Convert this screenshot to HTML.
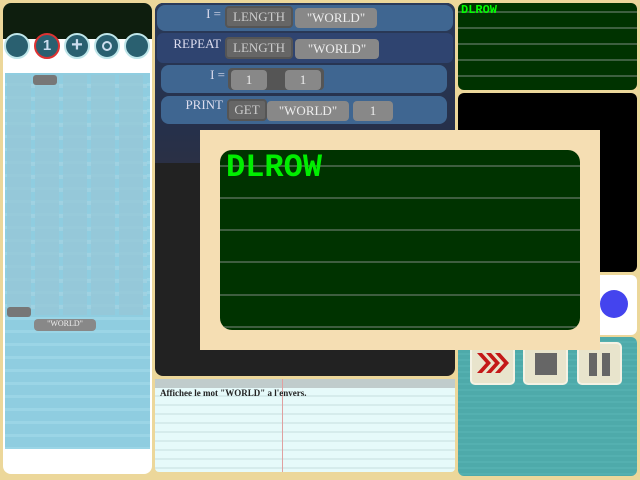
<!DOCTYPE html>
<html><head><style>
body{margin:0;width:640px;height:480px;background:#ecd79a;position:relative;overflow:hidden;font-family:"Liberation Serif",serif}
div{position:absolute;box-sizing:border-box}
.circ{width:26px;height:26px;border-radius:50%;background:#2a6070;border:2px solid #bfe6ea;top:33px}
.blk{background:#3f6691;border-radius:8px}
.lbl{color:#dde;font-size:13px;text-align:right}
.pill{background:#666;border:2px solid #555;border-radius:4px;color:#ccc;font-size:13px;text-align:center;line-height:18px;height:22px}
.pill2{background:#888;border-radius:4px;color:#eee;font-size:13px;text-align:center;line-height:20px;height:20px}
.gl{left:0;right:0;height:2px;background:#3e6040}
.btn{background:#e8e4cc;border-radius:5px;width:45px;height:43px;top:342px;border:2px solid #f4f2e4}
</style></head><body>
<!-- left panel -->
<div style="left:3px;top:3px;width:149px;height:471px;background:#fff;border-radius:8px;overflow:hidden">
 <div style="left:0;top:0;width:149px;height:36px;background:#0e1e0e"></div>
 <div style="left:2px;top:70px;width:145px;height:376px;background:repeating-linear-gradient(#8fcde0 0 10px,#9bd5e6 10px 13px)"></div>
 <div style="left:4px;top:72px;width:140px;height:240px;background:repeating-linear-gradient(90deg,#97c8d8 0 24px,transparent 24px 28px),repeating-linear-gradient(#8fcde0 0 9px,#a2d2e2 9px 13px);opacity:.8"></div>
 <div style="left:30px;top:72px;width:24px;height:10px;background:#777;border-radius:3px"></div>
 <div style="left:4px;top:304px;width:24px;height:10px;background:#777;border-radius:3px"></div>
 <div style="left:31px;top:316px;width:62px;height:12px;background:#888;border-radius:4px;color:#eee;font-size:8px;text-align:center">"WORLD"</div>
</div>
<div class="circ" style="left:4px"></div>
<div class="circ" style="left:34px;border-color:#d33;color:#cde;font:bold 15px 'Liberation Sans',sans-serif;text-align:center;line-height:22px">1</div>
<div class="circ" style="left:64px;color:#cde;font:bold 20px 'Liberation Sans',sans-serif;text-align:center;line-height:21px">+</div>
<div class="circ" style="left:94px"><div style="left:6px;top:6px;width:10px;height:10px;border:2px solid #cde;border-radius:50%"></div></div>
<div class="circ" style="left:124px"></div>
<!-- code area -->
<div style="left:155px;top:3px;width:300px;height:373px;background:#222;border-radius:8px;overflow:hidden">
 <div style="left:0;top:0;width:300px;height:160px;background:linear-gradient(#2a3a5a,#26304a 80%,#2a3045)"></div>
 <div class="blk" style="left:2px;top:2px;width:296px;height:26px"></div>
 <div style="left:2px;top:30px;width:296px;height:30px;background:#2f4470;border-radius:6px"></div>
 <div class="blk" style="left:6px;top:62px;width:286px;height:28px"></div>
 <div class="blk" style="left:6px;top:93px;width:286px;height:28px"></div>
 <div class="lbl" style="left:20px;top:3px;width:46px">I =</div>
 <div class="pill" style="left:70px;top:3px;width:68px">LENGTH</div>
 <div class="pill2" style="left:140px;top:5px;width:82px">"WORLD"</div>
 <div class="lbl" style="left:6px;top:33px;width:60px">REPEAT</div>
 <div class="pill" style="left:70px;top:34px;width:68px">LENGTH</div>
 <div class="pill2" style="left:140px;top:36px;width:84px">"WORLD"</div>
 <div class="lbl" style="left:20px;top:64px;width:50px">I =</div>
 <div class="pill" style="left:73px;top:65px;width:96px;background:#555"></div>
 <div class="pill2" style="left:76px;top:67px;width:36px">1</div>
 <div class="pill2" style="left:130px;top:67px;width:36px">1</div>
 <div class="lbl" style="left:10px;top:94px;width:58px">PRINT</div>
 <div class="pill" style="left:72px;top:96px;width:40px">GET</div>
 <div class="pill2" style="left:112px;top:98px;width:82px">"WORLD"</div>
 <div class="pill2" style="left:198px;top:98px;width:40px">1</div>
</div>
<!-- notes -->
<div style="left:155px;top:379px;width:300px;height:93px;background:repeating-linear-gradient(#e6fafa 0 7px,#d6ecec 7px 9px);border-radius:0 0 4px 4px">
 <div style="left:0;top:0;width:300px;height:9px;background:#c0cccc"></div>
 <div style="left:127px;top:0;width:1px;height:93px;background:#e0a0a0"></div>
 <div style="left:5px;top:9px;font-size:9px;font-weight:bold;color:#222;white-space:nowrap">Affichee le mot "WORLD" a l'envers.</div>
</div>
<!-- right -->
<div style="left:458px;top:3px;width:179px;height:87px;background:#003300;border-radius:6px;overflow:hidden">
 <div class="gl" style="top:8px"></div><div class="gl" style="top:24px"></div><div class="gl" style="top:40px"></div><div class="gl" style="top:56px"></div><div class="gl" style="top:72px"></div>
 <div style="left:3px;top:0;color:#0f0;font:bold 12px 'Liberation Mono',monospace">DLROW</div>
</div>
<div style="left:458px;top:93px;width:179px;height:179px;background:#000;border-radius:6px"></div>
<div style="left:458px;top:275px;width:179px;height:60px;background:#fff;border-radius:6px"></div>
<div style="left:600px;top:290px;width:28px;height:28px;border-radius:50%;background:#4444ee"></div>
<div style="left:458px;top:337px;width:179px;height:139px;background:repeating-linear-gradient(#4eaaaa 0 4px,#54b0b0 4px 6px);border-radius:6px"></div>
<div class="btn" style="left:470px"><svg width="41" height="39" style="position:absolute;left:0;top:0"><path d="M5 9 L14 19 L5 29 L10 29 L19 19 L10 9Z M14 9 L23 19 L14 29 L19 29 L28 19 L19 9Z M23 9 L32 19 L23 29 L28 29 L37 19 L28 9Z" fill="#c41818"/></svg></div>
<div class="btn" style="left:523px"><div style="left:10px;top:9px;width:22px;height:22px;background:#666"></div></div>
<div class="btn" style="left:577px"><div style="left:10px;top:9px;width:8px;height:23px;background:#666"></div><div style="left:23px;top:9px;width:8px;height:23px;background:#666"></div></div>
<!-- overlay -->
<div style="left:200px;top:130px;width:400px;height:220px;background:#f5deb3"></div>
<div style="left:220px;top:150px;width:360px;height:180px;background:#003300;border-radius:12px;overflow:hidden">
 <div class="gl" style="top:15px;background:#3f5e40"></div><div class="gl" style="top:47px;background:#3f5e40"></div><div class="gl" style="top:79px;background:#3f5e40"></div><div class="gl" style="top:111px;background:#3f5e40"></div><div class="gl" style="top:144px;background:#3f5e40"></div><div class="gl" style="top:176px;background:#3f5e40"></div>
 <div style="left:6px;top:-2px;color:#00ee00;font:bold 32px 'Liberation Mono',monospace;line-height:40px">DLROW</div>
</div>
</body></html>
